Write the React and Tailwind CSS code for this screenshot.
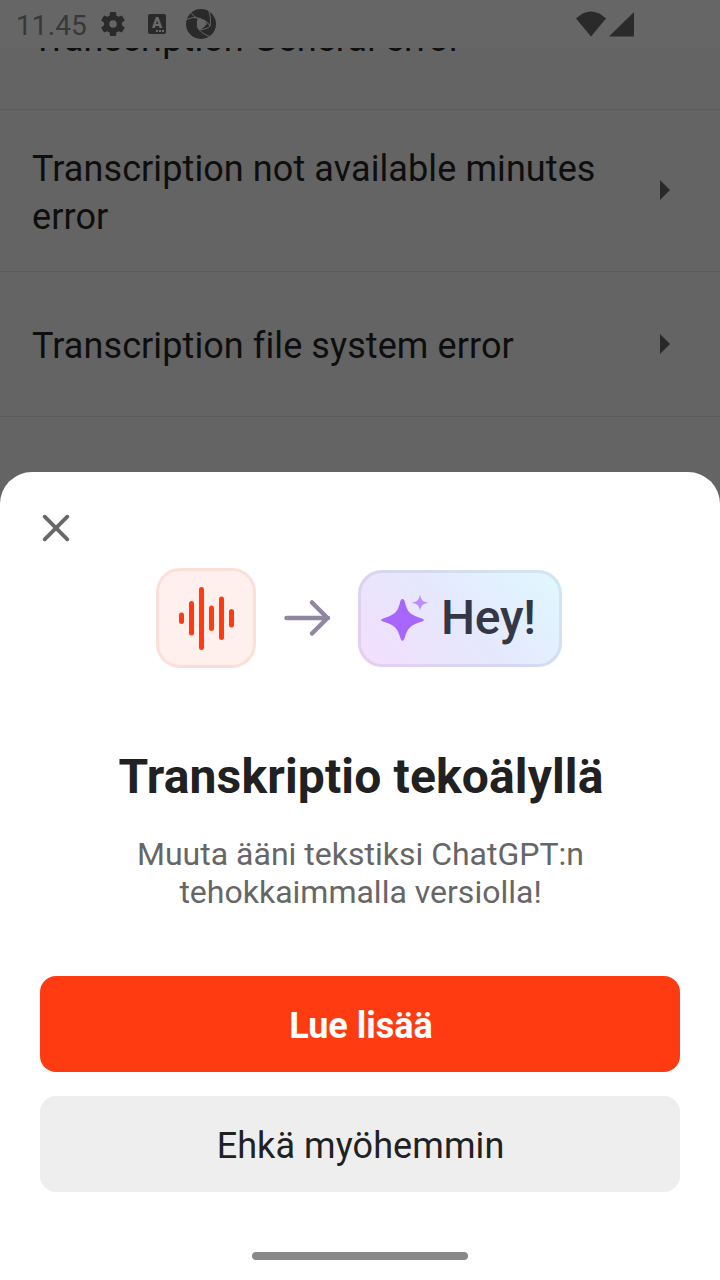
import React from "react";

function StatusBar() {
  return (
    <div className="flex h-12 shrink-0 items-center bg-[#666666] pl-4 text-[#2a2a2a]">
      <span className="mt-[4px] w-[71px] text-[28px] leading-none tracking-[0.1px] text-[#383838]">11.45</span>
      <svg className="ml-[11px] size-[30px]" viewBox="0 0 24 24" fill="currentColor">
        <path d="M19.14 12.94c.04-.3.06-.61.06-.94 0-.32-.02-.64-.07-.94l2.03-1.58a.49.49 0 0 0 .12-.61l-1.92-3.32a.488.488 0 0 0-.59-.22l-2.39.96c-.5-.38-1.03-.7-1.62-.94l-.36-2.54a.484.484 0 0 0-.48-.41h-3.84c-.24 0-.43.17-.47.41l-.36 2.54c-.59.24-1.13.57-1.62.94l-2.39-.96c-.22-.08-.47 0-.59.22L2.74 8.87c-.12.21-.08.47.12.61l2.03 1.58c-.05.3-.09.63-.09.94s.02.64.07.94l-2.03 1.58a.49.49 0 0 0-.12.61l1.92 3.32c.12.22.37.29.59.22l2.39-.96c.5.38 1.03.7 1.62.94l.36 2.54c.05.24.24.41.48.41h3.84c.24 0 .44-.17.47-.41l.36-2.54c.59-.24 1.13-.56 1.62-.94l2.39.96c.22.08.47 0 .59-.22l1.92-3.32c.12-.22.07-.47-.12-.61l-2.01-1.58zM12 15a3 3 0 1 1 0-6 3 3 0 0 1 0 6z" />
      </svg>
      <div className="ml-[20px] flex h-5 w-[18px] flex-col items-center rounded-[2px] bg-[#2a2a2a] text-[#6a6a6a]">
        <span className="h-[16px] text-[15px] leading-[19px] font-black">A</span>
        <div className="flex gap-[1px] self-end pr-[2px]">
          <i className="size-[2px] bg-current" />
          <i className="size-[2px] bg-current" />
          <i className="size-[2px] bg-current" />
        </div>
      </div>
      <svg className="ml-[20px] size-[30px]" viewBox="0 0 30 30">
        <circle cx="15" cy="15" r="15" fill="#2a2a2a" />
        <path d="M11.500 9Q15 9 17 10.500Q20 12.500 21 15Q18 19 13 21Q11.500 19.500 11 17Q10.500 13 11.500 9z" fill="#666" />
        <g fill="none" stroke="#666" strokeWidth="1">
          <path d="M0 10.500Q7 7 15 9.500" />
          <path d="M17 10.500Q21.500 12.500 24 17Q25.500 8 22.500 1.500" />
          <path d="M11.500 9Q7 7.500 5 3.500" />
          <path d="M11 17Q14 24.500 24 27.500" />
          <path d="M13 21Q22 20 24 17" />
        </g>
      </svg>
      <svg className="ml-[360px] h-[26px] w-[60px]" viewBox="0 0 60 26" fill="currentColor">
        <path d="M0 7.500Q15-6.500 30 7.500L15 25.500z" />
        <path d="M58 1v24.500H33z" />
      </svg>
    </div>
  );
}

function Row({ children, className }) {
  return (
    <div className={"flex shrink-0 items-center justify-between border-b border-[#5d5d5d] pl-8 pr-[50px] " + className}>
      <span className="w-[600px] pt-1 text-[36px] leading-[48px] tracking-[0.09px] text-[#0e0e0e]">{children}</span>
      <svg className="h-5 w-[10px]" viewBox="0 0 10 20" fill="#292929">
        <path d="M0 0 10 10 0 20z" />
      </svg>
    </div>
  );
}

function Waveform() {
  return (
    <div className="flex size-[100px] items-center justify-center rounded-[24px] border-[3px] border-[#fddfd9] bg-[#fff0ee]">
      <svg className="h-[64px] w-[56px]" viewBox="0 0 56 64" stroke="#ff3b12" strokeWidth="5" strokeLinecap="round">
        <path d="M3.500 29v6.500M13.500 17.500v29.500M23.500 3.500v58M33.500 22v20.500M43.500 13v38.500M53.500 25.500v13.500" />
      </svg>
    </div>
  );
}

function Sheet() {
  return (
    <div className="flex h-[808px] shrink-0 flex-col items-center rounded-t-[32px] bg-white px-10">
      <div className="flex h-24 w-full items-center pt-4">
        <svg className="size-8" viewBox="0 0 32 32" fill="none" stroke="#666" strokeWidth="3.800" strokeLinecap="round">
          <path d="M4.700 4.700 27.300 27.300M27.300 4.700 4.700 27.300" />
        </svg>
      </div>
      <div className="mr-[2px] flex h-[100px] w-[406px] items-center">
        <Waveform />
        <svg className="ml-[27px] h-[38px] w-[48px]" viewBox="0 0 48 38" fill="none" stroke="#9186a0" strokeWidth="4.500" strokeLinecap="round" strokeLinejoin="round">
          <path d="M3.500 19H45M29 3.500 44.500 19 29 34.500" />
        </svg>
        <div className="ml-[26.500px] flex h-[97px] w-[204.500px] shrink-0 items-center rounded-[24px] border-[3px] border-[#241a4a]/8 bg-[linear-gradient(45deg,#f4defd,#e5e8fd_50%,#e0f9ff)] bg-origin-border pl-[20.500px]">
          <svg className="h-[48px] w-[50px]" viewBox="0 0 50 48">
            <path fill="#a767ff" d="M21.500 5Q23 5 23.600 7C26 17 28 20 38 23.500Q43 25 43 26Q43 27 38 28.500C28 32 26 36 23.600 44Q22.500 47 21.500 47Q20.500 47 19.400 44C17 36 15 32 5 28.500Q0 27 0 26Q0 25 5 23.500C15 20 17 17 19.400 7Q20 5 21.500 5z" />
            <path fill="#bd8cff" d="M39 1C40.500 6.500 41.500 7.500 47.500 8.800C41.500 10 40.500 11 39 16.500C37.500 11 36.500 10 30.500 8.800C36.500 7.500 37.500 6.500 39 1z" />
          </svg>
          <span className="ml-[10px] text-[48px] leading-none font-medium tracking-[-0.2px] text-[#343746]">Hey!</span>
        </div>
      </div>
      <h1 className="mt-[81px] ml-[2px] text-[48px] leading-[56px] font-bold tracking-[0.15px] whitespace-nowrap text-[#212121]">Transkriptio tekoälyllä</h1>
      <p className="mt-[30px] ml-[1px] text-center text-[32px] leading-[38px] whitespace-nowrap text-[#666]">
        Muuta ääni tekstiksi ChatGPT:n
        <br />
        tehokkaimmalla versiolla!
      </p>
      <button className="mt-[65px] h-24 w-full shrink-0 rounded-2xl bg-[#ff3b12] pt-1 pl-[2px] text-[36px] font-bold text-white">Lue lisää</button>
      <button className="mt-6 h-24 w-full shrink-0 rounded-2xl bg-[#eeeeee] pt-1 pl-[1px] text-[36px] tracking-[0.08px] text-[#212121]">Ehkä myöhemmin</button>
      <div className="mt-[60px] h-2 w-[216px] shrink-0 rounded-full bg-[#888]" />
    </div>
  );
}

export default function App() {
  return (
    <div className="flex h-[1280px] w-[720px] flex-col overflow-hidden bg-[#646464] font-[Roboto,sans-serif]">
      <StatusBar />
      <div className="flex h-[424px] shrink-0 flex-col overflow-hidden">
        <div className="flex h-[62px] shrink-0 items-end overflow-hidden border-b border-[#5d5d5d] pb-[46px] pl-8">
          <span className="text-[36px] leading-[48px] tracking-[0.09px] text-[#0e0e0e]">Transcription General error</span>
        </div>
        <Row className="h-[162px] pb-[1px] [&>span]:pt-[6px]">Transcription not available minutes error</Row>
        <Row className="h-[145px]">Transcription file system error</Row>
      </div>
      <div className="flex shrink-0 flex-col bg-[linear-gradient(#646464_40px,#fff_40px)]">
        <Sheet />
      </div>
    </div>
  );
}
